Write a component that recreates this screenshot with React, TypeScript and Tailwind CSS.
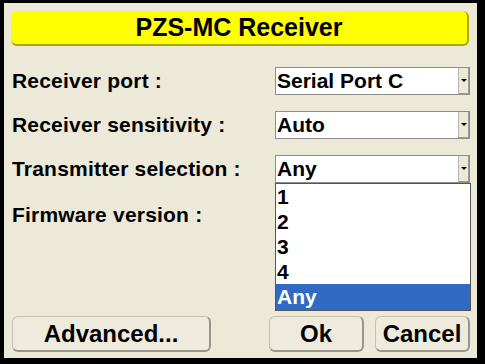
const font = { fontFamily: '"Liberation Sans", Arial, sans-serif' };

function Select({ value, open }: { value: string; open?: boolean }) {
  return (
    <div className="relative w-[195px] h-[28px]">
      <div className="flex h-full border border-[#8c8c8c] bg-white">
        <div className="flex-1 pl-[1px] leading-[26px] text-[21px] font-bold text-black">
          {value}
        </div>
        <div className="w-[11px] h-full flex items-center justify-center bg-[#ece9d8] border-l border-[#b9b7aa] border-r border-r-[#9d9b8f] border-b border-b-[#9d9b8f]">
          <div className="w-0 h-0 border-l-[3px] border-r-[3px] border-t-[3px] border-l-transparent border-r-transparent border-t-black" />
        </div>
      </div>
      {open && (
        <div className="absolute left-0 top-[28px] w-[196px] border border-[#555] bg-white z-10">
          {["1", "2", "3", "4"].map((o) => (
            <div key={o} className="h-[25px] pl-[1px] leading-[25px] text-[21px] font-bold text-black">
              {o}
            </div>
          ))}
          <div className="h-[26px] pl-[1px] leading-[25px] text-[21px] font-bold text-white bg-[#316ac5]">
            Any
          </div>
        </div>
      )}
    </div>
  );
}

function Row({ label, children }: { label: string; children?: React.ReactNode }) {
  return (
    <div className="flex items-center justify-between h-[28px]">
      <span className="text-[21px] font-bold text-black leading-[28px] tracking-[0.2px]">{label}</span>
      {children}
    </div>
  );
}

function Btn({ label, w }: { label: string; w: string }) {
  return (
    <button
      className={`${w} h-[36px] rounded-[6px] bg-[#eeebdd] border border-[#c3c0b0] border-r-2 border-b-2 border-r-[#97958a] border-b-[#97958a] text-[24px] font-bold text-black leading-[24px] pt-[1px]`}
    >
      {label}
    </button>
  );
}

export default function App() {
  return (
    <div style={font} className="w-[485px] h-[364px] bg-black pl-[4px] pt-[3px] pr-[8px] pb-[6px]">
      <div className="relative h-full bg-[#ece9d8] flex flex-col pl-[8px] pr-[7px]">
        <div className="mt-[8px] -ml-[1px] mr-[1px] h-[35px] rounded-[6px] bg-[#ffff00] border-r-2 border-b-2 border-[#a8a800] flex items-center justify-center">
          <span className="text-[25px] font-bold text-black">PZS-MC Receiver</span>
        </div>

        <div className="mt-[21px] flex flex-col gap-[16px]">
          <Row label="Receiver port :">
            <Select value="Serial Port C" />
          </Row>
          <Row label="Receiver sensitivity :">
            <Select value="Auto" />
          </Row>
          <Row label="Transmitter selection :">
            <Select value="Any" open />
          </Row>
          <div className="mt-[2px]">
            <Row label="Firmware version :" />
          </div>
        </div>

        <div className="mt-auto mb-[6px] flex items-center">
          <Btn label="Advanced..." w="w-[199px]" />
          <div className="ml-auto flex gap-[11px]">
            <Btn label="Ok" w="w-[95px]" />
            <Btn label="Cancel" w="w-[95px]" />
          </div>
        </div>
      </div>
    </div>
  );
}
